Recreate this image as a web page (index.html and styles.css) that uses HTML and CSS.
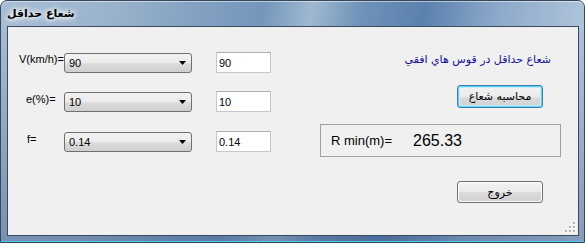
FILE: index.html
```html
<!DOCTYPE html>
<html lang="fa">
<head>
    <meta charset="UTF-8">
    <title>شعاع حداقل</title>
    <link rel="stylesheet" href="styles.css">
</head>
<body>
    <div class="window">
        <div class="titlebar">
            <span class="title" dir="rtl">شعاع حداقل</span>
        </div>

        <div class="client">
            <!-- ورودی ها -->
            <div class="inputs">
                <div class="row">
                    <span class="label lbl-v">V(km/h)=</span>
                    <div class="combo"><span>90</span><svg width="7" height="4"><polygon points="0,0 7,0 3.5,4" fill="#000"/></svg></div>
                    <input class="textbox" type="text" value="90">
                </div>
                <div class="row">
                    <span class="label lbl-e">e(%)=</span>
                    <div class="combo"><span>10</span><svg width="7" height="4"><polygon points="0,0 7,0 3.5,4" fill="#000"/></svg></div>
                    <input class="textbox" type="text" value="10">
                </div>
                <div class="row row-last">
                    <span class="label lbl-f">f=</span>
                    <div class="combo"><span>0.14</span><svg width="7" height="4"><polygon points="0,0 7,0 3.5,4" fill="#000"/></svg></div>
                    <input class="textbox" type="text" value="0.14">
                </div>
            </div>

            <!-- نتیجه -->
            <div class="side">
                <span class="caption" dir="rtl">شعاع حداقل در قوس هاي افقي</span>
                <button class="btn btn-default btn-calc" dir="rtl">محاسبه شعاع</button>
                <div class="result">
                    <span class="result-label">R min(m)=</span>
                    <span class="result-value">265.33</span>
                </div>
                <button class="btn btn-exit" dir="rtl">خروج</button>
            </div>

            <svg class="grip" width="11" height="11">
                <rect x="9" y="1" width="2" height="2" fill="#fff"/>
                <rect x="9" y="5" width="2" height="2" fill="#fff"/>
                <rect x="5" y="5" width="2" height="2" fill="#fff"/>
                <rect x="9" y="9" width="2" height="2" fill="#fff"/>
                <rect x="5" y="9" width="2" height="2" fill="#fff"/>
                <rect x="1" y="9" width="2" height="2" fill="#fff"/>
                <rect x="8" y="0" width="2" height="2" fill="#b4b4b4"/>
                <rect x="8" y="4" width="2" height="2" fill="#b4b4b4"/>
                <rect x="4" y="4" width="2" height="2" fill="#b4b4b4"/>
                <rect x="8" y="8" width="2" height="2" fill="#b4b4b4"/>
                <rect x="4" y="8" width="2" height="2" fill="#b4b4b4"/>
                <rect x="0" y="8" width="2" height="2" fill="#b4b4b4"/>
            </svg>
        </div>
    </div>
</body>
</html>
```

FILE: styles.css
```css
        body {
            margin: 0;
            width: 585px;
            height: 243px;
            overflow: hidden;
            background: #fff;
            font-family: 'Liberation Sans', 'DejaVu Sans', sans-serif;
        }

        .window {
            box-sizing: border-box;
            width: 585px;
            height: 243px;
            display: flex;
            flex-direction: column;
            border: 1px solid #37475c;
            border-radius: 7px 7px 0 0;
            background:
                linear-gradient(to bottom, rgba(40, 70, 120, 0) 0, rgba(40, 70, 120, 0) 26px, rgba(40, 70, 120, 0.35) 100%),
                linear-gradient(100deg, #a6bdd4 0%, #9ab3cc 18%, #86a3c3 30%, #7496bb 42%, #9fb8d1 50%, #6f92b8 58%, #5a81ad 68%, #8eaacb 80%, #a9c0d7 92%, #b8cbde 100%);
            box-shadow: inset 0 -1px 0 #4fc8ef, inset 0 1px 0 rgba(255, 255, 255, 0.5);
        }

        .titlebar {
            height: 25px;
            display: flex;
            align-items: center;
            padding-left: 6px;
        }

        .title {
            font-family: 'DejaVu Sans', sans-serif;
            font-size: 11px;
            font-weight: bold;
            color: #000;
            text-shadow: 0 0 4px #fff, 0 0 6px #fff, 0 0 8px rgba(255, 255, 255, 0.8);
        }

        .client {
            position: relative;
            flex: 1;
            display: flex;
            margin: 0 5px 6px 6px;
            background: #f0f0f0;
            border: 1px solid #3b4a5d;
        }

        .inputs {
            display: flex;
            flex-direction: column;
            gap: 19px;
            padding-top: 26px;
        }

        .row {
            display: flex;
            height: 20px;
        }

        .row-last {
            margin-top: 1px;
        }

        .label {
            box-sizing: border-box;
            width: 56px;
            font-size: 11px;
            line-height: 13px;
            padding-top: 1px;
            color: #000;
            white-space: nowrap;
        }

        .lbl-v { padding-left: 11px; padding-top: 0; }
        .lbl-e { padding-left: 18px; }
        .lbl-f { padding-left: 19px; }

        .combo {
            box-sizing: border-box;
            width: 128px;
            height: 20px;
            display: flex;
            justify-content: space-between;
            align-items: center;
            padding: 0 5px 0 4px;
            border: 1px solid #707070;
            border-radius: 3px;
            background: linear-gradient(#f2f2f2 0%, #ebebeb 50%, #dddddd 50%, #cfcfcf 100%);
            font-size: 11px;
            color: #000;
        }

        .textbox {
            box-sizing: border-box;
            width: 55px;
            height: 21px;
            margin: -1px 0 0 24px;
            padding: 0 2px;
            border: 1px solid #c3c8d0;
            border-top-color: #abadb3;
            background: #fff;
            font-family: 'Liberation Sans', sans-serif;
            font-size: 11px;
            color: #000;
        }

        .side {
            width: 241px;
            margin-left: 49px;
            display: flex;
            flex-direction: column;
            align-items: flex-end;
        }

        .caption {
            margin: 25px 10px 0 0;
            font-family: 'DejaVu Sans', sans-serif;
            font-size: 11px;
            line-height: 15px;
            color: #10109a;
        }

        .btn {
            box-sizing: border-box;
            width: 86px;
            height: 23px;
            padding: 0;
            border: 1px solid #707070;
            border-radius: 3px;
            background: linear-gradient(#f2f2f2 0%, #ebebeb 50%, #dddddd 50%, #cfcfcf 100%);
            font-family: 'DejaVu Sans', sans-serif;
            font-size: 11px;
            color: #000;
            box-shadow: inset 0 0 0 1px #fcfcfc;
        }

        .btn-default {
            border-color: #3c7fb1;
            box-shadow: inset 0 0 0 1px #5ed0f7, inset 0 0 0 2px #c5eefc;
        }

        .btn-calc {
            margin: 18px 18px 0 0;
        }

        .result {
            box-sizing: border-box;
            align-self: stretch;
            height: 33px;
            margin-top: 16px;
            display: flex;
            align-items: center;
            padding-left: 10px;
            border: 1px solid #a0a0a0;
        }

        .result-label {
            width: 82px;
            font-size: 13px;
            color: #000;
        }

        .result-value {
            font-size: 16px;
            color: #000;
        }

        .btn-exit {
            height: 22px;
            margin: 24px 18px 0 0;
        }

        .grip {
            position: absolute;
            right: 2px;
            bottom: 2px;
        }
```
